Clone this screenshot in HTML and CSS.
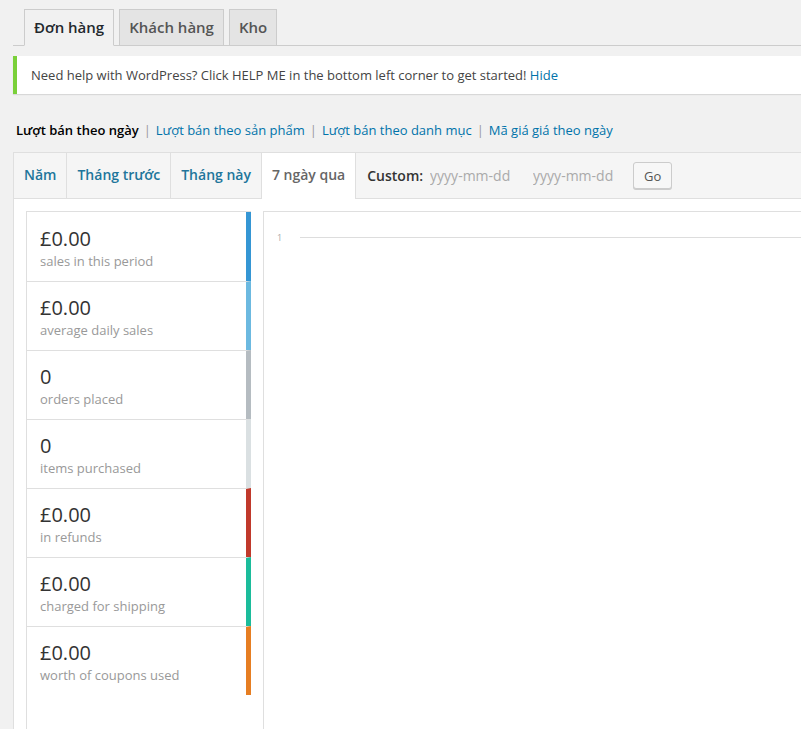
FILE: index.html
```html
<!DOCTYPE html>
<html lang="vi">
<head>
    <meta charset="UTF-8">
    <title>Báo cáo</title>
    <link rel="stylesheet" href="styles.css">
</head>
<body>
<div class="wrap">

    <div class="nav-tabs">
        <a class="nav-tab active" href="#">Đơn hàng</a>
        <a class="nav-tab" href="#">Khách hàng</a>
        <a class="nav-tab" href="#">Kho</a>
    </div>

    <div class="notice">
        <p>Need help with WordPress? Click HELP ME in the bottom left corner to get started! <a href="#">Hide</a></p>
    </div>

    <ul class="subsubsub">
        <li class="current">Lượt bán theo ngày</li>
        <li><a href="#">Lượt bán theo sản phẩm</a></li>
        <li><a href="#">Lượt bán theo danh mục</a></li>
        <li><a href="#">Mã giá giá theo ngày</a></li>
    </ul>

    <div class="postbox">
        <div class="stats-range">
            <a href="#">Năm</a>
            <a href="#">Tháng trước</a>
            <a href="#">Tháng này</a>
            <a href="#" class="active">7 ngày qua</a>
            <div class="custom">
                <b>Custom:</b>
                <input type="text" placeholder="yyyy-mm-dd">
                <input type="text" placeholder="yyyy-mm-dd">
                <button>Go</button>
            </div>
        </div>

        <div class="inside">
            <ul class="legend">
                <li class="c-blue"><strong>£0.00</strong><span>sales in this period</span></li>
                <li class="c-sky"><strong>£0.00</strong><span>average daily sales</span></li>
                <li class="c-grey"><strong>0</strong><span>orders placed</span></li>
                <li class="c-light"><strong>0</strong><span>items purchased</span></li>
                <li class="c-red"><strong>£0.00</strong><span>in refunds</span></li>
                <li class="c-green"><strong>£0.00</strong><span>charged for shipping</span></li>
                <li class="c-orange"><strong>£0.00</strong><span>worth of coupons used</span></li>
            </ul>

            <div class="chart">
                <div class="axis"><span>1</span><i></i></div>
            </div>
        </div>
    </div>

</div>
</body>
</html>
```
FILE: styles.css
```css
html, body { margin: 0; height: 100%; overflow: hidden; }
body { background: #f1f1f1; color: #444; font-family: 'Open Sans', sans-serif; font-size: 13px; }
a { color: #0073aa; text-decoration: none; }
.wrap { padding: 9px 0 0 13px; }

.nav-tabs { display: flex; gap: 5px; padding-left: 11px; border-bottom: 1px solid #ccc; }
.nav-tab { display: block; height: 35px; line-height: 35px; padding: 0 9px; margin-bottom: -1px; border: 1px solid #ccc; background: #e4e4e4; color: #555; font-size: 15px; font-weight: 600; }
.nav-tab.active { background: #f1f1f1; color: #23282d; border-bottom-color: #f1f1f1; }

.notice { margin-top: 10px; background: #fff; border-left: 4px solid #7ad03a; box-shadow: 0 1px 1px rgba(0,0,0,0.1); }
.notice p { margin: 0; padding: 0 14px; line-height: 38px; color: #444; }

.subsubsub { list-style: none; margin: 25px 0 0 3px; padding: 0; display: flex; line-height: 22px; color: #666; }
.subsubsub li + li::before { content: "|"; color: #999; margin: 0 5px 0 5px; }
.subsubsub .current { color: #000; font-weight: 600; }

.postbox { margin-top: 11px; width: calc(100% + 20px); height: 700px; background: #fff; border: 1px solid #dfdfdf; }
.stats-range { display: flex; align-items: center; height: 45px; background: #f5f5f5; border-bottom: 1px solid #dfdfdf; }
.stats-range > a { display: block; height: 45px; line-height: 44px; padding: 0 10px; border-right: 1px solid #dfdfdf; font-size: 14px; font-weight: 600; color: #21759b; }
.stats-range > a.active { background: #fff; color: #666; height: 46px; margin-bottom: -1px; }
.custom { display: flex; align-items: center; padding-left: 11px; }
.custom b { font-size: 14px; font-weight: 600; color: #333; margin-right: 2px; }
.custom input { width: 88px; padding: 0 5px; border: none; background: transparent; font-family: inherit; font-size: 14px; color: #aaa; }
.custom input + input { margin-left: 5px; }
.custom input::placeholder { color: #aaa; }
.custom button { margin-left: 7px; height: 27px; padding: 0 10px; border: 1px solid #ccc; border-radius: 3px; background: #f7f7f7; box-shadow: 0 1px 0 #ccc; font-family: inherit; font-size: 13px; color: #555; }

.inside { display: flex; padding: 12px 0 0 12px; }
.legend { list-style: none; margin: 0; padding: 0; width: 224px; border: 1px solid #dfdfdf; border-right: none; flex: none; }
.legend li { height: 69px; padding: 14px 0 0 13px; box-sizing: border-box; border-right: 5px solid #ccc; border-top: 1px solid #dfdfdf; }
.legend li:first-child { border-top: none; padding-top: 15px; }
.legend strong { display: block; font-size: 20px; font-weight: 400; line-height: 24px; color: #333; }
.legend span { display: block; line-height: 20px; color: #999; }
.c-blue { border-right-color: #3596d4 !important; }
.c-sky { border-right-color: #6cb9e0 !important; }
.c-grey { border-right-color: #b5bcc1 !important; }
.c-light { border-right-color: #dae0e2 !important; }
.c-red { border-right-color: #c0392b !important; }
.c-green { border-right-color: #1bbc9b !important; }
.c-orange { border-right-color: #e67e22 !important; }

.chart { flex: 1; margin-left: 12px; height: 600px; border: 1px solid #dfdfdf; border-right: none; border-bottom: none; }
.axis { display: flex; align-items: center; margin-top: 19px; padding-left: 13px; }
.axis span { font-size: 9px; color: #aaa; width: 23px; }
.axis i { flex: 1; height: 1px; background: #ddd; }
```
